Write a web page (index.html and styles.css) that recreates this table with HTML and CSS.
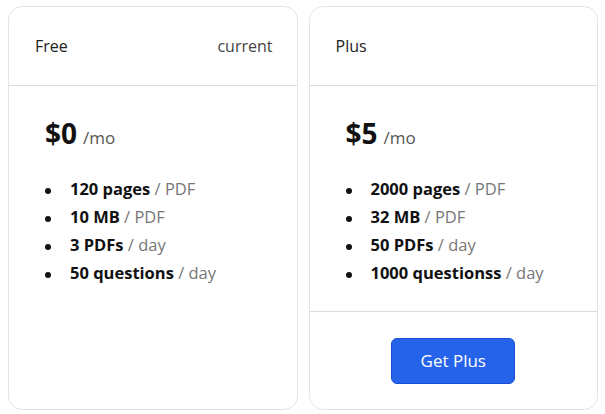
FILE: index.html
```html
<!DOCTYPE html>
<html>
<head>
<meta charset="utf-8">
<link rel="stylesheet" href="styles.css">
</head>
<body>
<div class="plans">
  <div class="card">
    <div class="card-head">
      <span>Free</span>
      <span class="tag">current</span>
    </div>
    <div class="card-body">
      <div class="price"><span class="amount">$0</span> <span class="per">/mo</span></div>
      <ul class="features">
        <li><b>120 pages</b> <span class="unit">/ PDF</span></li>
        <li><b>10 MB</b> <span class="unit">/ PDF</span></li>
        <li><b>3 PDFs</b> <span class="unit">/ day</span></li>
        <li><b>50 questions</b> <span class="unit">/ day</span></li>
      </ul>
    </div>
  </div>
  <div class="card">
    <div class="card-head">
      <span>Plus</span>
    </div>
    <div class="card-body bordered">
      <div class="price"><span class="amount">$5</span> <span class="per">/mo</span></div>
      <ul class="features">
        <li><b>2000 pages</b> <span class="unit">/ PDF</span></li>
        <li><b>32 MB</b> <span class="unit">/ PDF</span></li>
        <li><b>50 PDFs</b> <span class="unit">/ day</span></li>
        <li><b>1000 questionss</b> <span class="unit">/ day</span></li>
      </ul>
    </div>
    <div class="card-foot">
      <button class="cta">Get Plus</button>
    </div>
  </div>
</div>
</body>
</html>
```
FILE: styles.css
```css
* { box-sizing: border-box; }
html, body { margin: 0; background: #fff; }
body {
  font-family: "Open Sans", "Noto Sans", sans-serif;
  color: #111;
  padding: 6px 7px 5px 8px;
}
.plans {
  display: grid;
  grid-template-columns: 1fr 1fr;
  gap: 11px;
  height: 404px;
}
.card {
  border: 1px solid #e4e4e4;
  border-radius: 14px;
  display: flex;
  flex-direction: column;
  overflow: hidden;
}
.card-head {
  display: flex;
  justify-content: space-between;
  align-items: center;
  height: 79px;
  padding: 0 24px 0 26px;
  border-bottom: 1px solid #dcdcdc;
  font-size: 16px;
  color: #222;
}
.tag { color: #444; }
.card-body {
  flex: 1;
  padding: 28px 26px 0 36px;
}
.card-body.bordered {
  flex: 0 0 226px;
  border-bottom: 1px solid #dcdcdc;
}
.price {
  display: flex;
  align-items: baseline;
  gap: 6px;
  height: 38px;
}
.amount {
  font-size: 28px;
  font-weight: 700;
  color: #111;
}
.per {
  font-size: 17px;
  color: #555;
}
.features {
  margin: 23px 0 0;
  padding: 0;
  list-style: none;
  font-size: 16.5px;
  line-height: 28px;
}
.features li::before {
  content: "";
  display: inline-block;
  width: 6px;
  height: 6px;
  margin: 0 19px 0 0;
  border-radius: 50%;
  background: #111;
  vertical-align: middle;
}
.features b { font-weight: 700; color: #111; }
.unit { color: #777; font-weight: 400; }
.card-foot {
  flex: 1;
  display: flex;
  justify-content: center;
  align-items: center;
}
.cta {
  width: 124px;
  height: 46px;
  background: #2563eb;
  border: 1px solid #1d4ed8;
  border-radius: 6px;
  color: #fff;
  font-family: inherit;
  font-size: 17px;
  cursor: pointer;
}
```
